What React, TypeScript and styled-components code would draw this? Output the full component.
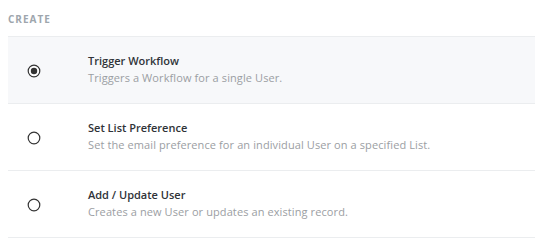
import { FC } from 'react';
import styled, { createGlobalStyle } from 'styled-components';

const GlobalStyle = createGlobalStyle`
    body {
        margin: 0;
        background: #ffffff;
        font-family: 'Open Sans', 'Liberation Sans', sans-serif;
    }
`;

type Action = {
    id: string;
    title: string;
    description: string;
};

const actions: Action[] = [
    {
        id: 'trigger',
        title: 'Trigger Workflow',
        description: 'Triggers a Workflow for a single User.',
    },
    {
        id: 'preference',
        title: 'Set List Preference',
        description:
            'Set the email preference for an individual User on a specified List.',
    },
    {
        id: 'user',
        title: 'Add / Update User',
        description: 'Creates a new User or updates an existing record.',
    },
];

const Radio: FC<{ checked: boolean }> = ({ checked }) => (
    <RadioBox>
        <svg width='14' height='14' viewBox='0 0 14 14'>
            <circle cx='7' cy='7' r='5.8' fill='#fff' stroke='#333' strokeWidth='1.2' />
            {checked && <circle cx='7' cy='7' r='3.2' fill='#333' />}
        </svg>
    </RadioBox>
);

const App: FC = () => {
    const selected = 'trigger';
    return (
        <Page>
            <GlobalStyle />
            <SectionLabel>Create</SectionLabel>
            <List>
                {actions.map((a) => (
                    <Row key={a.id} $active={a.id === selected}>
                        <Radio checked={a.id === selected} />
                        <TextBox>
                            <Title>{a.title}</Title>
                            <Description>{a.description}</Description>
                        </TextBox>
                    </Row>
                ))}
            </List>
        </Page>
    );
};

const Page = styled.div`
    padding: 13px 0 0 8px;
`;

const SectionLabel = styled.div`
    font-size: 10px;
    font-weight: 700;
    letter-spacing: 1px;
    text-transform: uppercase;
    color: #9ea6ad;
    line-height: 12px;
    margin-bottom: 11px;
`;

const List = styled.div`
    border-top: 1px solid #ebedef;
`;

const Row = styled.div<{ $active: boolean }>`
    display: flex;
    align-items: center;
    height: 66px;
    border-bottom: 1px solid #ebedef;
    background: ${(p) => (p.$active ? '#f7f8fa' : '#ffffff')};
`;

const RadioBox = styled.div`
    padding-left: 19px;
    margin-right: 47px;
    margin-top: 2px;
    svg {
        display: block;
    }
`;

const TextBox = styled.div`
    display: flex;
    flex-direction: column;
`;

const Title = styled.div`
    font-size: 11px;
    font-weight: 600;
    color: #2f3338;
    line-height: 16px;
`;

const Description = styled.div`
    font-size: 11px;
    letter-spacing: 0.1px;
    color: #9b9ea3;
    line-height: 18px;
`;

export default App;
